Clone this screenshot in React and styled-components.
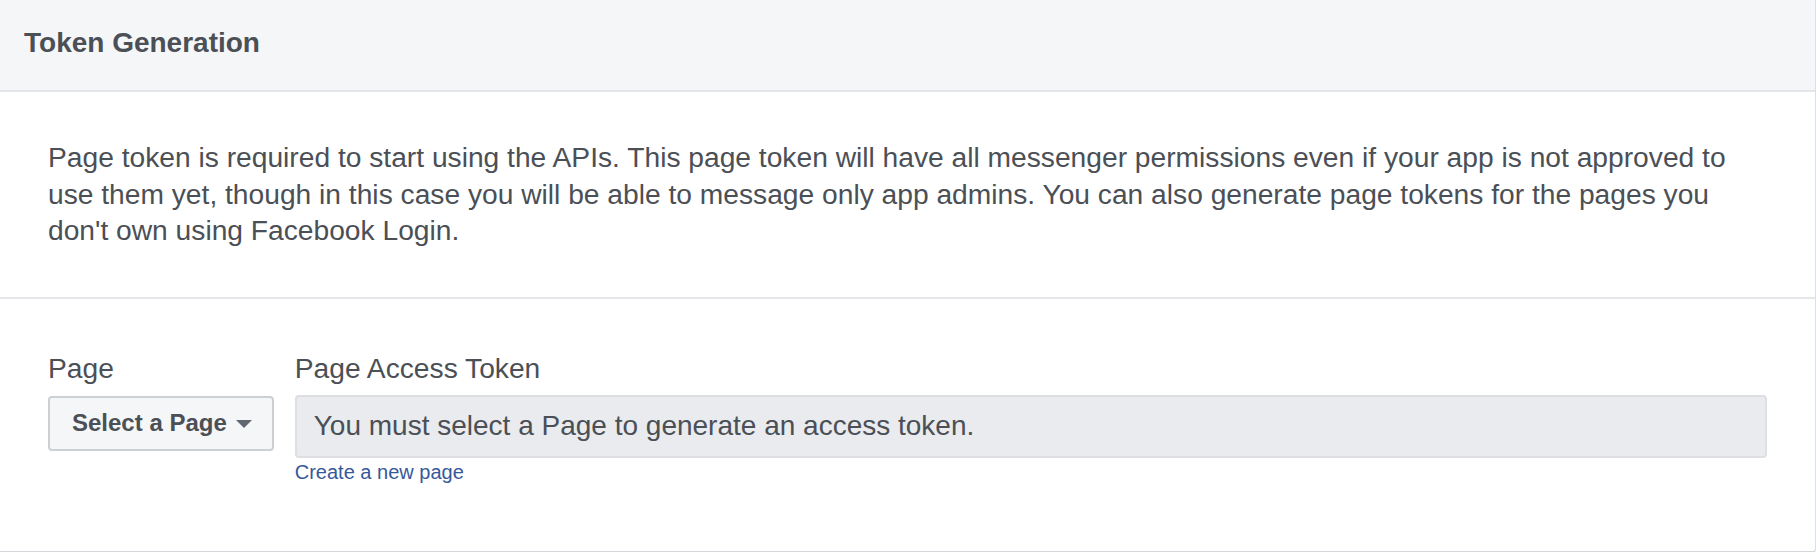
import React from 'react';
import styled, { createGlobalStyle } from 'styled-components';

const GlobalStyle = createGlobalStyle`
  html, body {
    margin: 0;
    padding: 0;
    background: #fff;
  }
  body {
    font-family: 'Liberation Sans', Arial, Helvetica, sans-serif;
    color: #4b4f56;
  }
`;

const Card = styled.div`
  width: 1816px;
  box-sizing: border-box;
  background: #fff;
  border-right: 1px solid #dddfe2;
  border-bottom: 2px solid #d3d6db;
  border-bottom-right-radius: 4px;
  overflow: hidden;
`;

const Header = styled.div`
  height: 92px;
  box-sizing: border-box;
  display: flex;
  align-items: center;
  padding: 0 24px 4px;
  background: #f5f6f7;
  border-bottom: 2px solid #e5e6e9;
  font-size: 28px;
  font-weight: bold;
  color: #4b4f56;
`;

const Section = styled.div`
  padding: ${(p) => p.$pad};
  border-bottom: ${(p) => (p.$divider ? '2px solid #e5e6e9' : 'none')};
`;

const Intro = styled.p`
  margin: 0;
  padding-right: 22px;
  font-size: 28.2px;
  line-height: 36.5px;
  color: #4b4f56;
`;

const FieldRow = styled.div`
  display: flex;
  gap: 21px;
  align-items: flex-start;
`;

const Field = styled.div`
  display: flex;
  flex-direction: column;
  flex: ${(p) => (p.$grow ? '1 1 auto' : '0 0 auto')};
`;

const Label = styled.div`
  font-size: 28.2px;
  line-height: 32px;
  margin-bottom: 12px;
  color: #4b4f56;
`;

const SelectButton = styled.button`
  display: flex;
  align-items: center;
  gap: 9px;
  height: 55px;
  margin: 0;
  padding: 0 20px 0 22px;
  box-sizing: border-box;
  background: #f5f6f7;
  border: 2px solid #ccd0d5;
  border-radius: 4px;
  font-family: inherit;
  font-size: 24px;
  font-weight: bold;
  color: #4b4f56;
  cursor: pointer;
`;

const Caret = styled.span`
  display: inline-block;
  width: 0;
  height: 0;
  border-left: 8px solid transparent;
  border-right: 8px solid transparent;
  border-top: 8px solid #606770;
  margin-top: 2px;
`;

const TokenBox = styled.div`
  height: 63px;
  box-sizing: border-box;
  margin-top: -1px;
  display: flex;
  align-items: center;
  padding: 0 17px;
  background: #e9ebee;
  border: 2px solid #dddfe2;
  border-radius: 4px;
  font-size: 28px;
  color: #4b4f56;
`;

const Link = styled.a`
  margin-top: 2px;
  font-size: 20px;
  line-height: 24px;
  color: #365899;
  text-decoration: none;
  cursor: pointer;
`;

export default function App() {
  return (
    <>
      <GlobalStyle />
      <Card>
        <Header>Token Generation</Header>
        <Section $pad="47px 48px 48px" $divider>
          <Intro>
            Page token is required to start using the APIs. This page token will have all messenger
            permissions even if your app is not approved to use them yet, though in this case you will
            be able to message only app admins. You can also generate page tokens for the pages you
            don't own using Facebook Login.
          </Intro>
        </Section>
        <Section $pad="53px 48px 67px">
          <FieldRow>
            <Field>
              <Label>Page</Label>
              <SelectButton>
                Select a Page
                <Caret />
              </SelectButton>
            </Field>
            <Field $grow>
              <Label>Page Access Token</Label>
              <TokenBox>You must select a Page to generate an access token.</TokenBox>
              <Link>Create a new page</Link>
            </Field>
          </FieldRow>
        </Section>
      </Card>
    </>
  );
}
